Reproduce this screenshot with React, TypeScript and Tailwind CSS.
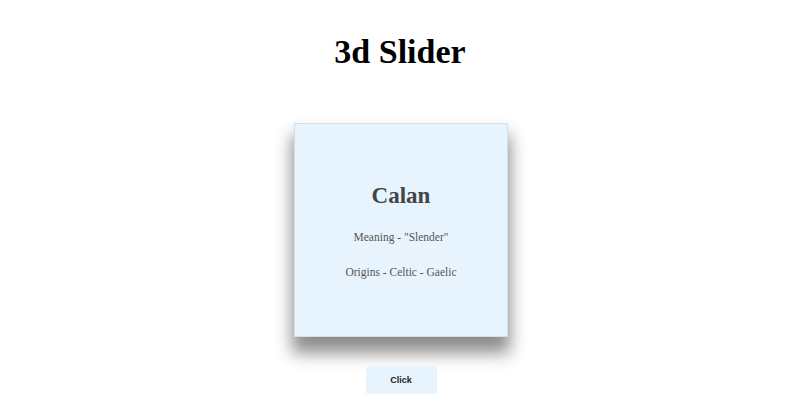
export default function App(): JSX.Element {
    return (
        <div className="min-h-screen bg-white flex flex-col items-center" style={{ fontFamily: '"Liberation Serif", serif' }}>
            <h1 className="mt-[32px] text-[34px] leading-[39px] font-bold text-black">3d Slider</h1>
            <div className="ml-[2px] mt-[52px] w-[214px] h-[214px] bg-[#e8f4fd] border border-[#d6dde3] shadow-[0_14px_16px_2px_rgba(0,0,0,0.45)] flex flex-col items-center text-center">
                <h2 className="mt-[58px] text-[23px] leading-[27px] font-bold text-[#444]">Calan</h2>
                <p className="mt-[21px] text-[11.5px] leading-[15px] text-[#555]">Meaning - "Slender"</p>
                <p className="mt-[20px] text-[11.5px] leading-[15px] text-[#555]">Origins - Celtic - Gaelic</p>
            </div>
            <button
                className="ml-[2px] mt-[29px] w-[71px] h-[28px] pt-[2px] rounded-[3px] bg-[#e8f4fd] text-[9px] font-bold text-[#222]"
                style={{ fontFamily: '"Liberation Sans", Arial, sans-serif' }}
            >
                Click
            </button>
        </div>
    )
}
